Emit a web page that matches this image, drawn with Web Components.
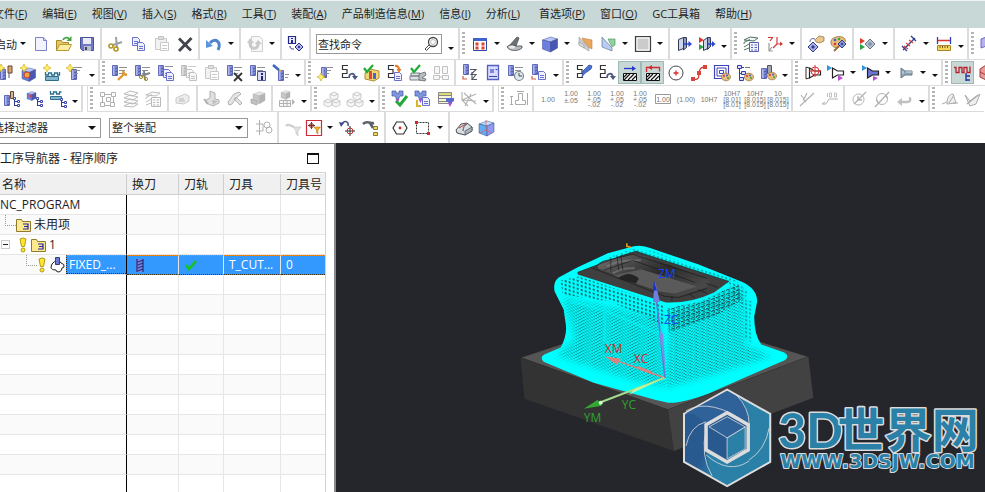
<!DOCTYPE html>
<html lang="zh-CN">
<head>
<meta charset="utf-8">
<title>工序导航器</title>
<style>
  html, body {
    height: 100%;
    margin: 0;
  }
  body {
    --line: #dcdcdc;
    --menu: #c8d8d6;
    font-family: "Open Sans", "Noto Sans CJK SC", sans-serif;
    font-size: 11px;
    color: #1e1e1e;
    background: #fff;
    overflow: hidden;
  }
</style>
</head>
<body>
<cam-app>
  <menu-bar slot="menu"></menu-bar>

  <tool-row slot="tools" size="large">
    <tool-group lead items="_ v new open save | cut copy paste~ close | undo v | redo~ v | info |">启动</tool-group>
    <command-search></command-search>
    <tool-group grip items="fit v shade v cube v planeA planeB v box v | doorA doorB >"></tool-group>
    <tool-group grip items="layers csys v | handCube palette | playCube v | measure v ruler >"></tool-group>
    <tool-group grip items="stack"></tool-group>
  </tool-row>

  <tool-row slot="tools">
    <tool-group items="newTool newGeom newMethod newOp >" pull></tool-group>
    <tool-group grip items="millWrench millCut millCopy millCopy~ paste~ millX millInfo millPen >"></tool-group>
    <tool-group grip items="millStar path pathBars pathPage pathHand twin~ | millList docBlue millClock millDoc >"></tool-group>
    <tool-group grip items="pathPen path hatchA! hatchB! target curve squares treePal millPal >"></tool-group>
    <tool-group grip items="coneT coneA v coneB v coneC v >"></tool-group>
    <tool-group grip items="wave! redBlob"></tool-group>
  </tool-row>

  <tool-row slot="tools">
    <tool-group items="treeTool treeGeom treeMethod >"></tool-group>
    <tool-group grip apart items="groupBox~ sheets~ layers~ | tag~ | solidA~ solidB~ solidC~ | boxTable~ >"></tool-group>
    <tool-group grip items="cubes~ cubes~ >"></tool-group>
    <tool-group grip items="verify funnelDoc funnelGrid axes~ >"></tool-group>
    <tool-group grip apart items="dims~ | d0 d1 d2 d3 d4 d5 d6 d7 d8 d9 d10 | rough~ label~ | diaA~ diaB~ back~ >"></tool-group>
    <tool-group grip items="surfA~ surfB~"></tool-group>
  </tool-row>

  <tool-row slot="tools" size="last">
    <filter-select name="选择过滤器" pull></filter-select>
    <filter-select name="整个装配" wide></filter-select>
    <tool-group flat items="asm~ | funnelOff~ funnelBox v rotate tree | hex rect v | solidD cubeRed"></tool-group>
  </tool-row>

  <operation-navigator slot="side"></operation-navigator>
  <model-view></model-view>
</cam-app>

<script>
// shared icon parts
const mill = (x = 1, y = 1) => `<g transform="translate(${x} ${y})"><path fill="#7d88d6" stroke="#4a55a8" stroke-width=".8" d="M.5.5h5v10h-5z"/><path stroke="#3c4794" stroke-width=".7" d="M3 4l2.500-1M3 7l2.500-1M3 10l2.500-1"/><path stroke="#c6cbf3" d="M1.800 1v9"/></g>`;
const rows = `<path stroke="#8d9196" d="M8 3.500h8M8 6.500h6M8 9.500h4"/>`;
const star = (x = 0, y = 0) => `<path transform="translate(${x} ${y})" fill="#fff06a" stroke="#cfae20" stroke-width=".7" d="M4 0l1.300 2.700L8 4 5.300 5.300 4 8 2.700 5.300 0 4l2.700-1.300z"/>`;
const page = (x, y, c = '#5a62c8') => `<path transform="translate(${x} ${y})" fill="#eef0ff" stroke="${c}" stroke-width=".9" d="M.5.5h5l2 2v6h-7zM2 4.500h4M2 6.500h4"/>`;
const cubeAt = (x, y, s, a = '#b9c6fb', b = '#6d7fe0', c = '#4657b4') => `<g transform="translate(${x} ${y}) scale(${s})" stroke="#3b478f" stroke-width=".5"><path fill="${a}" d="M0 4l8-3 7 2-7 3z"/><path fill="${b}" d="M0 4l8 2v10l-8-3z"/><path fill="${c}" d="M8 6l7-3v9l-7 4z"/></g>`;
const branch = (x, y) => `<g transform="translate(${x} ${y})"><path stroke="#333a8c" d="M1.500 1v8M2 4.500h3M2 8.500h3"/><path fill="#fff" stroke="#3b43b0" d="M.5.500h2v2h-2zM4.500 3.500h2v2h-2zM4.500 7.500h2v2h-2z"/></g>`;
const snake = `<path stroke="#333" stroke-width="1.200" d="M8 1.500H2.500v4H7v4H2.500v4H8"/>`;
const hook = `<path stroke="#4b5680" stroke-width="1.700" d="M9 14c0-5 5-6 6-1"/><path fill="#4b5680" d="M12 12h6l-3 4z"/>`;
const palette = (x, y) => `<g transform="translate(${x} ${y})"><ellipse cx="5" cy="4" rx="4.500" ry="3.800" fill="#e7bd7e" stroke="#94703a" stroke-width=".7"/><circle cx="3" cy="3" r="1" fill="#d33"/><circle cx="6" cy="2.500" r="1" fill="#3a5bd0"/><circle cx="7" cy="5" r="1" fill="#3a3"/></g>`;
const funnel = (x, y, c = '#f0a21c', s = 1) => `<path transform="translate(${x} ${y}) scale(${s})" fill="${c}" stroke="#a8700a" stroke-width=".6" d="M0 0h8L5 4v5L3 7V4z"/>`;
const funnelB = `<path fill="#7f95de" stroke="#43579f" stroke-width=".7" d="M1 1h4v2h3V1h4v5H9L7.500 9h-2L4 6H1z"/><path fill="#b04fd0" d="M4.500 9h4l-2 4z"/>`;
const cone = (f) => `<path fill="${f}" stroke="#222" stroke-width="1.200" d="M5.500 4v10l5-3h6V7h-6z"/>`;
const dim = (a, b, c) => `<g class="t"><text x="9" y="${b ? 6 : 11.500}">${a}</text>${b ? `<text x="9" y="${c ? 11.500 : 13}">${b}</text>` : ''}${c ? `<text x="9" y="17">${c}</text>` : ''}</g>`;
const tick = (x, y) => `<path transform="translate(${x} ${y})" stroke="#1fae35" stroke-width="2.200" d="M1 3l3 4 6-7"/>`;

const ICONS = {
  new: `<path fill="#f2f3ff" stroke="#7c80c9" d="M3.500 2.500h8l3 3v10h-11z"/><path fill="#cfd2f6" stroke="#7c80c9" d="M11.500 2.500v3h3"/>`,
  open: `<path fill="#e4c963" stroke="#a98b2d" d="M1.500 15.500v-10h5l1 2h6v8z"/><path fill="#fbeca0" stroke="#b99a35" d="M1.500 15.500l3-6h12l-3 6z"/><path stroke="#43a640" stroke-width="1.800" d="M8 5c1-3 5-3 6-1"/><path fill="#43a640" d="M16.500 1v5h-5z"/>`,
  save: `<path fill="#6f78c4" stroke="#4a5193" d="M2.500 2.500h13v13h-11l-2-2z"/><path fill="#e9ecf6" d="M5 3h8v6H5z"/><path fill="#b9bfd8" d="M6 11h7v5H6z"/><path fill="#444" d="M7 12h2v3H7z"/>`,
  cut: `<path stroke="#9ba0a6" stroke-width="2" d="M6 10l9-3M10 13l-1-11"/><circle cx="4" cy="11" r="2" stroke="#b39622" stroke-width="1.600"/><circle cx="9" cy="14" r="2" stroke="#b39622" stroke-width="1.600"/>`,
  copy: page(2, 2) + page(7, 7),
  paste: `<path fill="#e3e3e3" stroke="#888" d="M2.500 3.500h11v11h-11z"/><path fill="#bbb" stroke="#777" d="M5.500 1.500h5v3h-5z"/><path fill="#fff" stroke="#888" d="M7.500 7.500h8v8h-8zM9 10.500h5M9 13.500h5"/>`,
  close: `<path stroke="#41444a" stroke-width="2.800" d="M3 3.500l12 12M15.500 3L3 16"/>`,
  undo: `<path stroke="#4f83cd" stroke-width="3" d="M5 8c5-6 12-1 8 7"/><path fill="#5b93dc" d="M1 5l7 6-7 2z"/>`,
  redo: `<path fill="#eee" stroke="#999" d="M5.500 1.500h8l3 3v12h-11z"/><path stroke="#888" stroke-width="3" d="M4 8c0 7 8 7 8 1"/><path fill="#888" d="M1 8l3-5 4 5zM9 9l3-4 4 4z"/>`,
  info: `<path fill="#e8eaff" stroke="#23298a" stroke-width="1.200" d="M1.500 1.500h7v7h-7z"/><path fill="#23298a" d="M4 3h2v1H4zM4 5h2v3H4z"/><path stroke="#23298a" d="M3 11c0 3 2 3 4 3"/><path fill="#b8c0f0" stroke="#23298a" d="M12 8l4 4-4 4-4-4z"/><path fill="#23298a" d="M12 10.500l1.500 1.500-1.500 1.500-1.500-1.500z"/>`,
  fit: `<path fill="#fff" stroke="#2e49a8" d="M2.500 3.500h13v12h-13z"/><path fill="#3f62cf" d="M2 3h14v3H2z"/><path fill="#e04132" d="M4.500 7.500h3v3h-3zM10.500 7.500h3v3h-3zM4.500 11.500h3v3h-3zM10.500 11.500h3v3h-3z"/>`,
  shade: `<path fill="#6c7277" stroke="#44484c" stroke-width=".7" d="M3 11L11 2l2 1-3 8z"/><path fill="#b7bcc0" stroke="#44484c" stroke-width=".8" d="M1 12c2-3 7-2 9-1h6v2c-3 3-12 4-15-1z"/><ellipse cx="6" cy="12" rx="3" ry="1.500" fill="#e8eaeb"/>`,
  cube: cubeAt(1.5, 1, 1),
  planeA: `<path fill="#eaa65a" stroke="#b98445" stroke-width=".6" d="M6 3l10 2v9l-6-3z"/><path fill="#c9ccd0" stroke="#999da2" stroke-width=".6" d="M3 2l10 11v3L3 10z"/><path fill="#dadcdf" stroke="#999" stroke-width=".6" d="M3 7l5 3v3l-5-3z"/>`,
  planeB: `<path fill="#8fd3a0" stroke="#56945f" stroke-width=".7" d="M9 4h7v6l-3 2z"/><path fill="#b9cdf3" stroke="#66799e" stroke-width=".7" d="M3 2l10 11v3L3 12z"/>`,
  box: `<path fill="#cbcbcb" stroke="#3f3f3f" stroke-width="1.200" d="M1.500 1.500h15v15h-15z"/><path stroke="#fff" d="M3 3h12v12H3z"/>`,
  doorA: `<path fill="#cdd5ea" stroke="#333a55" d="M3.500 4.500l5-2v11l-5 2z"/><path fill="#919bbf" stroke="#333a55" d="M8.500 2.500h3v10l-3 2.500z"/><path stroke="#2946d6" stroke-width="1.500" d="M9 9h6"/><path fill="#2946d6" d="M13.500 6L17 9l-3.500 3z"/>`,
  doorB: `<path fill="#e2382d" d="M1 2l5 3-5 3z"/><path fill="#2fa148" d="M1 9l5 3-5 3z"/><path fill="#cdd5ea" stroke="#333a55" d="M5.500 5.500l4-3v11l-4 2z"/><path fill="#919bbf" stroke="#333a55" d="M9.500 2.500h3v9l-3 3z"/><path stroke="#2946d6" stroke-width="1.500" d="M10 9h5"/><path fill="#2946d6" d="M14 6l3.500 3-3.500 3z"/>`,
  layers: `<path fill="#f2f6f2" stroke="#4c7564" d="M1 5l6-3 8 1-4 3zM1 9V7.500l6-3M1 12l5-3M1 15l5-2"/><path fill="#f3f4ff" stroke="#5960b5" d="M6.500 7.500h9v9h-9z"/><path stroke="#5960b5" stroke-width="1.200" d="M8 10h2M11.500 10H14M8 12.500h2M11.500 12.500H14M8 15h2M11.500 15H14"/>`,
  csys: `<path stroke="#ce3b36" stroke-width="1.200" d="M2 2.500h5M7 2l-3 4M11 2v7h5M11 9l-4 4"/><path stroke="#9b9b9b" stroke-width="1.200" d="M3 8v8h4M3 16l3-4"/><path fill="#ce3b36" d="M14 6.500l3 2.500-3 2z"/>`,
  handCube: `<path fill="#e9c890" stroke="#8d6e3a" stroke-width=".7" d="M8 5l4-4 5 1v4l-4 2-4-1z"/><path stroke="#555a85" d="M3 7c0-3 2-4 5-3"/><path fill="#a5aee7" stroke="#333b86" d="M6 7l5 5-5 5-5-5z"/><path fill="#333b86" d="M6 10l2 2-2 2-2-2z"/>`,
  palette: `<path fill="#e7bd7e" stroke="#94703a" stroke-width=".8" d="M1 6c1-4 9-6 13-3 3 3 1 5-2 5l-3 4c-5 2-9-2-8-6z"/><circle cx="5" cy="5" r="1.300" fill="#3a5bd0"/><circle cx="9" cy="4" r="1.300" fill="#3a3"/><circle cx="5" cy="9" r="1.300" fill="#d33"/><path stroke="#9a6b33" stroke-width="1.800" d="M4 16l5-5"/><path fill="#8f9ade" stroke="#333b86" d="M12 5l4 4-4 4-4-4z"/><path fill="#333b86" d="M12 7.500l1.500 1.500-1.500 1.500-1.500-1.500z"/>`,
  playCube: `<path fill="#e2382d" d="M1 3l5 3-5 3z"/><path fill="#2fa148" d="M1 9l5 3-5 3z"/><path fill="#b8c3cc" stroke="#66727c" d="M11 4l5 5-5 5-5-5z"/><path fill="#8592bb" d="M11 6.500l2.500 2.500-2.500 2.500L8.500 9z"/>`,
  measure: `<path stroke="#313b8d" stroke-width="1.300" d="M2 11l5 5M11 1l5 5M3 15L15 3"/><path stroke="#dc3b38" stroke-width="1.200" d="M6 8l4 3M4 11l4 3M9 5l4 3"/>`,
  ruler: `<path stroke="#3240b5" stroke-width="1.300" d="M2.500 2v7M15.500 2v7"/><path stroke="#d33" stroke-width="1.500" d="M3 5.500h12"/><path fill="#f5d55f" stroke="#a88726" d="M2.500 10.500h13v5h-13z"/><path stroke="#75581a" d="M5 11v2M7.500 11v2M10 11v2M12.500 11v2"/>`,
  stack: `<path fill="#b7b2ee" stroke="#6f69c4" d="M1 4l8-3v9l-8 3z"/><path fill="#e8a9c8" d="M6 8l6-2v8l-6 2z"/>`,
  newTool: mill(3, 5) + star() + `<path fill="#dba26f" stroke="#654736" d="M11 2h4v7h-4z"/><path stroke="#4c5474" d="M12 9v5"/>`,
  newGeom: cubeAt(2, 3, .9) + star() + `<circle cx="7" cy="11" r="3" fill="#f4a33c" stroke="#cd3e25"/>`,
  newMethod: `<path stroke="#2e6d8d" stroke-width="1.300" d="M2.500 8v3h3V9h3v2h3V9h3v2h2V8"/><path fill="#83b5cd" stroke="#2e6d8d" d="M2.500 12.500h13v4h-13z"/>` + star(),
  newOp: mill(5, 5) + rows + star(),
  millWrench: mill() + rows + `<path stroke="#e0992e" stroke-width="2.400" d="M7 16l6-6M13 10l3 1M13 10l-1-3"/>`,
  millCut: mill() + rows + `<path stroke="#7f858a" stroke-width="2" d="M7 12l9-3M11 16l-1-9"/><circle cx="7" cy="13" r="1.600" stroke="#a08a2b"/><circle cx="12" cy="15" r="1.600" stroke="#a08a2b"/>`,
  millCopy: mill() + `<path stroke="#8d9196" d="M8 2.500h8"/>` + page(6, 5) + page(9, 8),
  millX: mill() + rows + `<path stroke="#333" stroke-width="1.800" d="M8 9l8 8M16 9l-8 8"/>`,
  millInfo: mill() + rows + `<path fill="#d9dcfa" stroke="#4f5793" d="M8.500 7.500h8v9h-8z"/><path fill="#222960" d="M12 9h2v2h-2zM12 12h2v4h-2z"/>`,
  millPen: mill(6, 6) + `<path stroke="#3c66c4" stroke-width="2.600" d="M1 1l6 5"/><path stroke="#8d9196" d="M13 10.500h4M13 13.500h3"/><path fill="#e7b13c" d="M7 5l3 1-2 2z"/>`,
  millStar: mill(4, 3) + rows + star(0, 9),
  path: snake + hook,
  pathBars: `<path fill="#f2d779" stroke="#b08b31" d="M2 9l5-4 9 2v7l-5 3-9-2z"/><path fill="#da4b3e" d="M6 7h3v8H6z"/><path fill="#4a66cf" d="M10 9h3v6h-3z"/>` + tick(0, 1),
  pathPage: snake + page(8, 8) + `<path stroke="#e47c27" stroke-width="2.200" d="M9 2c3-1 4 2 4 4"/><path fill="#e47c27" d="M10.500 5h5L13 9z"/>`,
  pathHand: `<path fill="#dfe2e5" stroke="#7b8085" d="M2 9h9v3H2zM1 12h11v4H1z"/><path fill="#b8bdc3" stroke="#62676c" stroke-width=".8" d="M10 10l6-2 1 3-4 3 4 1-1 2-6-1z"/>` + tick(1, 1),
  twin: `<path fill="#eee" stroke="#777" d="M2.500 2.500h5v7h-5zM10.500 2.500h5v7h-5zM1.500 11.500h6v4h-6zM10.500 11.500h6v4h-6z"/><path stroke="#777" d="M7 13h4"/>`,
  millList: mill(2, 0) + `<path stroke="#d65b3c" stroke-width="1.200" d="M2 12v3h4"/><path stroke="#55595f" stroke-width="1.100" d="M9 5.500h6l-5 5h5l-4 5h5M11 8v8"/>`,
  docBlue: `<path fill="#d9dcff" stroke="#5560bd" stroke-width="1.300" d="M3.500 1.500h11v14h-11z"/><path fill="#7c87dc" d="M6 5h4v4H6z"/><path stroke="#3a44ad" d="M5 12.500h8M11.500 5.500h2"/>`,
  millClock: mill() + rows + `<circle cx="12" cy="12" r="4.500" fill="#dfe7eb" stroke="#788992" stroke-width="1.200"/><path stroke="#45545b" d="M12 9v3h3"/>`,
  millDoc: mill(2, 0) + `<path stroke="#d65b3c" stroke-width="1.200" d="M2 12v3h4"/>` + page(8, 7),
  pathPen: snake + `<path fill="#4c73d6" stroke="#25418f" stroke-width=".7" d="M8 7l6-6 3 1-1 3-7 5-2 3z"/>`,
  hatchA: `<path stroke="#2536c8" stroke-width="1.300" d="M3 4.500h9"/><path fill="#2536c8" d="M11 2l4 2.500-4 2.500z"/><path fill="#fff" stroke="#111" d="M2.500 9.500h13v7h-13z"/><path stroke="#111" stroke-width="1.200" d="M3 13l3-3M3 16l6-6M7 16l6-6M11 16l4-4"/>`,
  hatchB: `<path stroke="#d12a2a" stroke-width="1.300" d="M2.500 8V3.500h13v4"/><path fill="#d12a2a" d="M8 1v5L4 3.500z"/><path fill="#fff" stroke="#111" d="M2.500 9.500h13v7h-13z"/><path stroke="#111" stroke-width="1.200" d="M3 13l3-3M3 16l6-6M7 16l6-6M11 16l4-4"/>`,
  target: `<circle cx="9" cy="9" r="7" fill="#fff" stroke="#444"/><path stroke="#e02a2a" stroke-width="1.300" d="M6.500 9h5M9 6.500v5"/>`,
  curve: `<path stroke="#c93c33" stroke-width="1.300" d="M3 15c11 3 1-12 12-12"/><path fill="#d8453b" d="M1 13h4v4H1zM7 7h4v4H7zM13 1h4v4h-4z"/>`,
  squares: `<path fill="#fff" stroke="#3f45b8" stroke-width="1.200" d="M1.500 1.500h14v13h-14z"/><path stroke="#3f45b8" d="M4 4h9v8H4zM6.500 6.500h4v3h-4z"/>` + palette(8, 9),
  treePal: `<path stroke="#333fa8" d="M3.500 2v14M4 3.500h4M4 9.500h4M4 15.500h3"/><path fill="#d9dcff" stroke="#333fa8" d="M1.500 1.500h4v3h-4zM5.500 7.500h4v3h-4zM3.500 13.500h4v3h-4z"/><path stroke="#777" d="M9 3.500h5M11 9.500h3"/>` + palette(8, 9),
  millPal: mill(2, 4) + `<path fill="#a3a6af" stroke="#53565f" d="M8.500 1.500h4v8h-4z"/>` + palette(8, 8),
  coneT: cone('#fff') + `<path stroke="#333" d="M5 4L2 3v12l3-1"/><circle cx="11" cy="7" r="4" stroke="#d33"/><path stroke="#d33" d="M11 1v12M5 7h12"/>`,
  coneA: cone('#fff') + `<path fill="#3295dd" d="M0 1l5 3-5 3z"/><path fill="#b94fd2" d="M11 11l5 3-5 3z"/>`,
  coneB: cone('#6c75d6') + `<path fill="#3295dd" d="M0 1l5 3-5 3z"/><path fill="#b94fd2" d="M11 12l5 2-5 3z"/>`,
  coneC: `<path fill="#8ea5b6" stroke="#66798a" d="M4 4v10l4-3h7V7H8z"/><path stroke="#d5dfe6" d="M6 7v3M9 8h6"/>`,
  wave: `<path stroke="#b81f2b" stroke-width="1.300" d="M0 3.500h2v5h3v-5h3v5h2v-5h3v5h3v-6"/><path stroke="#1f2d9f" stroke-width="1.300" d="M12 9v8M12 12h4M12 16h4"/>`,
  redBlob: `<path fill="#e89a98" stroke="#a53a3a" d="M3 5l6-4 6 3v8l-6 4-6-3z"/><path stroke="#a53a3a" d="M3 8l6 3 6-3"/>`,
  treeTool: mill(1, 5) + `<path fill="#d5b498" stroke="#654736" d="M7.500 1.500h3v7h-3z"/>` + branch(10, 7),
  treeGeom: cubeAt(1, 1, .6) + `<circle cx="5" cy="6" r="1.500" fill="#e04132"/>` + branch(10, 7),
  treeMethod: `<path stroke="#2e6d8d" stroke-width="1.300" d="M1.500 1v3h3V2h3v2h3V2h2"/><path fill="#83b5cd" stroke="#2e6d8d" d="M1.500 6.500h11v3h-11z"/>` + branch(11, 8),
  groupBox: `<path stroke="#555" d="M3.500 4.500h11v11h-11z"/><path fill="#fff" stroke="#555" d="M1.500 2.500h4v4h-4zM12.500 2.500h4v4h-4zM1.500 12.500h4v4h-4zM11.500 12.500h4v4h-4zM7.500 7.500h4v4h-4z"/>`,
  sheets: `<path fill="#f7f7f7" stroke="#666" d="M2 4l6-3 8 2-5 3zM2 8l6-3 8 2-5 3zM2 12l6-3 8 2-5 3zM2 16l6-3 8 1-5 3z"/>`,
  tag: `<path fill="#d7d7d7" stroke="#888" d="M2 8l9-4 4 2v5l-5 3-8-1z"/><path stroke="#666" d="M5 9h5M5 11h6"/>`,
  solidA: `<path fill="#bbb" stroke="#555" d="M7 1l5 2v6l4 1v3l-6 3-7-3v-3l4-2z"/><path fill="#777" d="M9 10l6 1-5 4z"/><path stroke="#555" stroke-width="2" d="M1 9l4 5"/>`,
  solidB: `<path fill="#c7c7c7" stroke="#555" d="M2 12l6-8 5-2 2 2-5 4-4 6-3 1zM10 7l6 6-2 2-6-6z"/>`,
  solidC: cubeAt(4, 1, .8) + `<path fill="#777" stroke="#555" d="M2 9l6 2v4l-6-2z"/>`,
  boxTable: cubeAt(3, 0, .6) + `<path fill="#eee" stroke="#555" d="M1.500 10.500h11v6h-11zM2 13.500h10M5.500 11v5M9 11v5"/><path fill="#555" d="M14 9l3 3-3 3z"/>`,
  cubes: `<g fill="#ececec" stroke="#888"><path d="M7 4l4-2 4 2v4l-4 2-4-2zM1 11l4-2 4 2v4l-4 2-4-2zM9 11l4-2 4 2v4l-4 2-4-2z"/><path d="M7 4l4 2 4-2M1 11l4 2 4-2M9 11l4 2 4-2"/></g>`,
  verify: funnelB + `<path stroke="#25a83a" stroke-width="3" d="M5 11l4 4 7-9"/>`,
  funnelDoc: funnelB + page(8, 7) + `<path stroke="#d8b62b" stroke-width="2" d="M3 10v7M3 16h4"/>`,
  funnelGrid: `<path fill="#f6f6dd" stroke="#888" d="M1.500 2.500h13v11h-13zM2 5.500h12M2 8.500h12M2 11.500h12"/><path fill="#dcdc7b" d="M2 3h12v2H2z"/><path fill="#5768cf" d="M9 8h8v3l-3 2h-2L9 11z"/><path fill="#b04fd0" d="M11 13h4l-2 4z"/>`,
  axes: `<path stroke="#555" stroke-width="1.100" d="M2 2v8l6 6M2 10l14-6M2 10l14 1M4 3l12 11M5 16l6-12"/>`,
  dims: `<path stroke="#444" d="M5.500 14.500v-4h3v-7h4v7h3v4zM1.500 6v9M0 6.500h3M0 14.500h3M7 1.500h7M17.500 3v12"/>`,
  d0: dim('1.00'), d1: dim('1.00', '±.05'), d2: dim('1.00', '+.05', '-.02'), d3: dim('1.00', '+.05', '-.02'), d4: dim('1.00', '+.05', '-.02'),
  d5: `<path stroke="#999" d="M1.500 4.500h15v9h-15z"/>` + dim('1.00'), d6: dim('(1.00)'), d7: dim('10H7'),
  d8: dim('10H7', '[8.01]', '[8.01]'), d9: dim('10H7', '[8.015]', '[8.015]'), d10: dim('10', '[8.015]', '[8.015]'),
  rough: `<path stroke="#555" stroke-width="1.200" d="M2 16L16 3M3 5l3 4M9 3l-3 6M5 9l3 3"/>`,
  label: `<path stroke="#555" d="M1 14h4l3-5h9M1 14l3-2"/><path stroke="#777" d="M6.500 3v4M8.500 3h2v4h-2zM13.500 3h2v4h-2z"/>`,
  diaA: `<circle cx="8.500" cy="9.500" r="5.500" stroke="#555"/><path stroke="#555" stroke-width="1.300" d="M4 14L16 2M8 10v-4M8 10h4"/>`,
  diaB: `<circle cx="9" cy="9" r="5.500" stroke="#555"/><path stroke="#555" stroke-width="1.300" d="M2 17L16 2M5 13l-1-3M13 5l1 3"/>`,
  back: `<path stroke="#777" stroke-width="2.400" d="M5 12h6c4 0 4-4 2-4"/><path fill="#777" d="M1 12l5-4v8z"/>`,
  surfA: `<path fill="#ddd" stroke="#444" d="M6 14c0-6 2-10 6-10l3 9zM1 14l5-2M12 13h5"/><path stroke="#444" d="M8 13l5-8"/>`,
  surfB: `<path fill="#ddd" stroke="#444" d="M1 5l5 6 10-7-4 10-6 2z"/><path stroke="#444" stroke-width="1.300" d="M3 14l11-9"/>`,
  asm: `<path stroke="#555" d="M4.500 1v15M1 5h7M1 12h7v-7"/><circle cx="12" cy="6" r="3" stroke="#555"/><circle cx="14" cy="11" r="3" stroke="#555"/>`,
  funnelOff: `<path stroke="#999" stroke-width="2.500" d="M2 7c3-4 5 2 8 0"/>` + funnel(9, 8, '#bbb'),
  funnelBox: `<path fill="#fff" stroke="#cf2b3d" stroke-width="1.200" d="M1.500 1.500h15v15h-15z"/><circle cx="6.500" cy="6.500" r="2" stroke="#802f2f"/><path stroke="#802f2f" d="M6.500 3v7M3 6.500h7"/>` + funnel(9, 8, '#f3b229', .8),
  rotate: `<path stroke="#3a4a89" stroke-width="1.500" d="M3 5c2-4 7-3 6 2"/><path fill="#3a4a89" d="M0 3l5 1-3 4z"/><circle cx="11" cy="12" r="3" stroke="#d33"/><path stroke="#333" d="M11 7v10M6 12h10"/>`,
  tree: `<path stroke="#59626a" stroke-width="2.600" d="M1 5c4-4 8 0 11-1M8 4l3 5"/><path fill="#eed869" stroke="#8a7b2b" d="M11.500 7.500h4v3h-4zM11.500 13.500h4v3h-4z"/>`,
  hex: `<path fill="#fff" stroke="#333" stroke-width="1.200" d="M5.500 3h7L16 9l-3.500 6h-7L2 9z"/><circle cx="9" cy="9" r="1.400" fill="#dd2525"/>`,
  rect: `<path stroke="#333" stroke-dasharray="2 1" d="M2.500 3.500h12v11h-12z"/><path fill="#dd2525" d="M1 2h3v3H1zM13 13h3v3h-3z"/>`,
  solidD: `<path fill="#d7dde1" stroke="#48525a" d="M1 11l5-6 6-1 5 4v4l-7 4-8-2z"/><path fill="#a9b3ba" stroke="#48525a" stroke-width=".7" d="M10 16v-4l7-4v4z"/><path stroke="#cf3434" d="M4 9l7-4"/><path stroke="#48525a" d="M8 12c0-4 2-6 4-7"/>`,
  cubeRed: cubeAt(1, 1, 1, '#bfe1ff', '#62aef0', '#8d9bf0') + `<path stroke="#e2606b" stroke-width=".8" d="M8 1v10M8 11l6 3M8 11l-6 3"/>`,
};

const icon = (name) => `<svg viewBox="0 0 18 18" width="18" height="18" fill="none" aria-hidden="true">${ICONS[name]}</svg>`;

class CamApp extends HTMLElement {
  constructor() {
    super();
    this.attachShadow({ mode: 'open' }).innerHTML = `
      <style>
        :host {
          display: flex;
          flex-direction: column;
          height: 100vh;
          overflow: hidden;
        }
        main {
          display: flex;
          flex: 1;
          min-height: 0;
        }
      </style>
      <slot name="menu"></slot>
      <slot name="tools"></slot>
      <main><slot name="side"></slot><slot></slot></main>`;
  }
}

class MenuBar extends HTMLElement {
  constructor() {
    super();
    const items = [['文件', 'F'], ['编辑', 'E'], ['视图', 'V'], ['插入', 'S'], ['格式', 'R'], ['工具', 'T'], ['装配', 'A'],
      ['产品制造信息', 'M'], ['信息', 'I'], ['分析', 'L'], ['首选项', 'P'], ['窗口', 'O'], ['GC工具箱', ''], ['帮助', 'H']];
    this.attachShadow({ mode: 'open' }).innerHTML = `
      <style>
        :host {
          display: flex;
          gap: 15px;
          height: 27px;
          align-items: center;
          margin-left: -7px;
          background: var(--menu);
          border-top: 1px solid #eef3f2;
        }
        button {
          all: unset;
          white-space: nowrap;
          line-height: 16px;
          padding-bottom: 2px;
        }
        .far { margin-left: 4px; }
      </style>
      ${items.map(([t, k]) => `<button class="${k === 'P' ? 'far' : ''}">${t}${k ? `(<u>${k}</u>)` : ''}</button>`).join('')}`;
  }
}

class ToolRow extends HTMLElement {
  constructor() {
    super();
    this.attachShadow({ mode: 'open' }).innerHTML = `
      <style>
        :host {
          display: flex;
          flex: none;
          height: 26px;
          overflow: hidden;
        }
        :host([size="large"]) { height: 32px; }
        :host([size="last"]) {
          height: 31px;
          align-items: center;
        }
      </style>
      <slot></slot>`;
  }
}

// items: icon names, "v" arrow, ">" overflow arrow, "|" separator, "_" slot; "~" disabled, "!" pressed
class ToolGroup extends HTMLElement {
  connectedCallback() {
    if (this.shadowRoot) return;
    this.attachShadow({ mode: 'open' }).innerHTML = `
      <style>
        :host {
          display: flex;
          flex: none;
          align-items: center;
          box-sizing: border-box;
          border-bottom: 1px solid var(--line);
        }
        :host([pull]) { margin-left: -6px; }
        :host([lead]) { margin-left: -5px; }
        :host([apart]) {
          margin-left: 4px;
          border-left: 1px solid var(--line);
        }
        :host([flat]) {
          border: 0;
          height: 100%;
          margin-left: 4px;
        }
        button { all: unset; }
        .tool {
          display: grid;
          place-items: center;
          width: 23px;
          height: 23px;
          box-sizing: border-box;
        }
        .off svg {
          filter: grayscale(1);
          opacity: .45;
        }
        .on {
          background: var(--menu);
          border: 1px solid #9dbab5;
        }
        .framed { width: 20px; }
        .drop, .more {
          width: 12px;
          display: grid;
          place-items: center;
        }
        .drop::after, .more::after {
          content: "";
          border: 3px solid transparent;
          border-top-color: #111;
          border-bottom: 0;
        }
        .more {
          align-self: stretch;
          border-right: 2px solid var(--line);
          padding-top: 6px;
        }
        .sep {
          width: 2px;
          margin: 0 2px;
          align-self: stretch;
          background: var(--line);
        }
        .grip {
          width: 3px;
          height: 24px;
          margin: 0 3px 0 2px;
          background: linear-gradient(#b4b4b4 2px, transparent 2px) 0 0 / 3px 4px;
        }
        .t {
          font: 7px "Liberation Sans", sans-serif;
          fill: #777;
          text-anchor: middle;
        }
        svg { overflow: visible; display: block; }
      </style>
      ${this.hasAttribute('grip') ? '<span class="grip"></span>' : ''}
      ${this.getAttribute('items').split(' ').map(t => this.item(t)).join('')}`;
  }

  item(t) {
    if (t === '_') return '<slot></slot>';
    if (t === '|') return '<span class="sep"></span>';
    if (t === 'v') return '<button class="drop" aria-label="更多"></button>';
    if (t === '>') return '<button class="more" aria-label="选项"></button>';
    const name = t.replace(/[~!]/, '');
    const cls = t.endsWith('~') ? 'off' : t.endsWith('!') ? 'on' : '';
    return `<button class="tool ${cls} ${name === 'funnelBox' ? 'framed' : ''}" aria-label="${name}">${icon(name)}</button>`;
  }
}

class CommandSearch extends HTMLElement {
  constructor() {
    super();
    this.attachShadow({ mode: 'open' }).innerHTML = `
      <style>
        :host {
          display: flex;
          align-items: center;
          padding-left: 3px;
          border-right: 2px solid var(--line);
          border-bottom: 1px solid var(--line);
        }
        label {
          display: flex;
          align-items: center;
          width: 126px;
          height: 20px;
          box-sizing: border-box;
          border: 1px solid #999;
        }
        input {
          all: unset;
          flex: 1;
          min-width: 0;
          padding-left: 1px;
        }
        .more {
          all: unset;
          margin: 10px 4px 0 6px;
          border: 3px solid transparent;
          border-top-color: #111;
          border-bottom: 0;
        }
      </style>
      <label>
        <input value="查找命令" aria-label="查找命令">
        <svg width="18" height="18" viewBox="0 0 18 18" fill="none" stroke="#444"><circle cx="10" cy="7" r="4.500" stroke-width="1.300"/><circle cx="10" cy="7" r="2.500" stroke="#bbb"/><path d="M6 10l-4 4 1.500 1.500 4-4"/></svg>
      </label>
      <button class="more" aria-label="选项"></button>`;
  }
}

class FilterSelect extends HTMLElement {
  connectedCallback() {
    if (this.shadowRoot) return;
    const name = this.getAttribute('name');
    this.attachShadow({ mode: 'open' }).innerHTML = `
      <style>
        :host {
          display: grid;
          align-items: center;
          width: 111px;
          margin-right: 8px;
        }
        :host([pull]) { margin-left: -10px; }
        :host([wide]) { width: 139px; margin-right: 0; }
        select, .arrow { grid-area: 1 / 1; }
        select {
          appearance: none;
          width: 100%;
          height: 20px;
          padding: 0 0 0 2px;
          border: 1px solid #999;
          border-radius: 0;
          background: #fff;
          font: inherit;
          color: inherit;
        }
        .arrow {
          justify-self: end;
          margin-right: 5px;
          border: 4px solid transparent;
          border-top-color: #111;
          border-bottom: 0;
          pointer-events: none;
        }
      </style>
      <select aria-label="${name}"><option>${name}</option></select>
      <span class="arrow"></span>`;
  }
}

class OperationNavigator extends HTMLElement {
  constructor() {
    super();
    const bang = '<svg width="10" height="16" viewBox="0 0 10 16"><path fill="#ffe52e" stroke="#b39a18" d="M2 2q3-2 6 0L6.500 9.500h-3z"/><circle cx="5" cy="13" r="2" fill="#ffe52e" stroke="#b39a18"/></svg>';
    const folder = '<svg width="15" height="14" viewBox="0 0 15 14" fill="none"><path fill="#ffe98f" stroke="#8f7b30" d="M.5 13.500v-12h5l1 2h8v10z"/><path stroke="#1c26a8" stroke-width="1.200" d="M7 6h5v2.500H8M12 8.500V11H7"/></svg>';
    const op = '<svg width="15" height="16" viewBox="0 0 15 16" fill="#fff" stroke="#222"><path d="M2 7q2-3 5-3 4 0 4 2 4 1 3 4l-2 1q0 3-3 4-3 0-3-2-5 0-5-3z"/><path fill="#6c78d6" stroke="#343e83" d="M5.500.500h4v7h-4z"/></svg>';
    const tool = '<svg width="10" height="15" viewBox="0 0 10 15"><path fill="#7d88e6" d="M1 1h8v13H1z"/><path stroke="#23307c" stroke-width="1.300" d="M2 1v13M8 1v13M3 4l5-2M3 7l5-2M3 10l5-2M3 13l5-2"/></svg>';
    const check = '<svg width="14" height="12" viewBox="0 0 14 12" fill="none"><path stroke="#14c51f" stroke-width="2.600" d="M2 6l3 4 7-8"/></svg>';
    this.attachShadow({ mode: 'open' }).innerHTML = `
      <style>
        :host {
          display: flex;
          flex-direction: column;
          flex: none;
          width: 334px;
          border-top: 1px solid #85858a;
          border-right: 2px solid #8a8a8a;
          font-size: 12px;
          overflow: hidden;
        }
        header {
          display: flex;
          align-items: center;
          justify-content: space-between;
          height: 28px;
          padding-right: 15px;
        }
        h2 {
          margin: 0;
          font: inherit;
        }
        header button {
          all: unset;
          width: 10px;
          height: 8px;
          border: 1px solid #111;
          border-top-width: 2px;
        }
        .list {
          flex: 1;
          min-height: 0;
          overflow: hidden;
          margin-right: 8px;
          border: 1px solid #d3d3d3;
          border-width: 1px 1px 0 0;
          padding-top: 1px;
        }
        table {
          width: 100%;
          table-layout: fixed;
          border-collapse: separate;
          border-spacing: 0;
        }
        th, td {
          height: 20px;
          box-sizing: border-box;
          padding: 0 0 0 5px;
          border-right: 1px solid #e6e6e6;
          border-bottom: 1px solid #e6e6e6;
          font-weight: normal;
          text-align: left;
          line-height: 16px;
          white-space: nowrap;
          overflow: hidden;
        }
        th {
          height: 21px;
          padding-top: 2px;
          background: #f0f0f0;
          border-color: #cfcfcf;
        }
        th:first-child { padding-left: 2px; }
        td:first-child {
          padding: 0;
          border-right: 1px solid #000;
        }
        th:last-child, td:last-child { border-right: 0; }
        tr:nth-child(even) td { background: #fafafa; }
        tr.selected td:not(:first-child), tr.selected .name {
          background: #3399ff;
          color: #fff;
          border-top: 1px dotted #f28a1c;
          border-bottom: 1px dotted #3a2a10;
        }
        .cell {
          display: flex;
          align-items: center;
          gap: 3px;
          height: 19px;
        }
        .cell svg { flex: none; }
        .in1 { padding-left: 16px; }
        .in2 { padding-left: 1px; }
        .in3 { padding-left: 37px; }
        .twig {
          width: 10px;
          height: 10px;
          margin: -9px -3px 0 -11px;
          border-left: 1px dotted #999;
          border-bottom: 1px dotted #999;
        }
        .name {
          flex: 1;
          height: 19px;
          box-sizing: border-box;
          padding-left: 2px;
          margin-left: -2px;
          line-height: 17px;
          border-left: 1px dotted #3a2a10;
        }
        .fold {
          all: unset;
          width: 7px;
          height: 7px;
          margin-right: 5px;
          border: 1px solid #ccc;
          background: linear-gradient(#222, #222) center / 5px 1px no-repeat;
        }
        td svg { display: block; }
      </style>
      <header><h2>工序导航器 - 程序顺序</h2><button aria-label="最大化"></button></header>
      <div class="list">
        <table>
          <colgroup><col style="width: 127px"><col style="width: 52px"><col style="width: 45px"><col style="width: 57px"><col></colgroup>
          <thead><tr><th>名称</th><th>换刀</th><th>刀轨</th><th>刀具</th><th>刀具号</th></tr></thead>
          <tbody>
            <tr><td>NC_PROGRAM</td><td></td><td></td><td></td><td></td></tr>
            <tr><td><div class="cell in1"><i class="twig"></i>${folder}未用项</div></td><td></td><td></td><td></td><td></td></tr>
            <tr><td><div class="cell in2"><button class="fold" aria-label="折叠"></button>${bang}${folder} 1</div></td><td></td><td></td><td></td><td></td></tr>
            <tr class="selected"><td><div class="cell in3"><i class="twig"></i>${bang}${op}<span class="name">FIXED_...</span></div></td><td style="padding-left: 8px">${tool}</td><td>${check}</td><td>T_CUT...</td><td>0</td></tr>
            ${'<tr><td></td><td></td><td></td><td></td><td></td></tr>'.repeat(12)}
          </tbody>
        </table>
      </div>`;
  }
}

class ModelView extends HTMLElement {
  constructor() {
    super();
    const skin = 'M577 268L607 254 633 247Q641 245 650 249L697 265 740 282Q756 289 756 302L753 317Q753 335 760 345L783 353Q789 357 783 361L750 375 707 394Q680 404 667 403L654 400 593 383 543 362Q538 357 546 354L560 348Q567 335 565 324L563 310 554 292Q552 283 558 278Z';
    this.attachShadow({ mode: 'open' }).innerHTML = `
      <style>
        :host {
          display: block;
          flex: 1;
          min-width: 0;
          background: #25262b;
        }
        svg {
          display: block;
          width: 100%;
          height: 100%;
        }
        .axis {
          font: 12px "Open Sans", sans-serif;
        }
        .mark {
          fill: #2b80a8;
          stroke: #dcdcdc;
          paint-order: stroke;
          stroke-linejoin: round;
          font-weight: bold;
        }
      </style>
      <svg viewBox="336 144 649 348" preserveAspectRatio="xMinYMin slice" fill="none">
        <defs>
          <pattern id="left" width="4" height="3" patternUnits="userSpaceOnUse" patternTransform="skewY(17)"><path fill="#1c3038" d="M0 0h2v1H0zM2 1.500h2v1H2z"/></pattern>
          <pattern id="right" width="4" height="3" patternUnits="userSpaceOnUse" patternTransform="skewY(-22)"><path fill="#1c3038" d="M0 0h2v1H0zM2 1.500h2v1H2z"/></pattern>
          <pattern id="holes" width="4" height="4" patternUnits="userSpaceOnUse" patternTransform="skewY(17)"><path fill="#1d2b30" d="M0 0h2v2H0z"/></pattern>
          <pattern id="slits" width="5" height="4" patternUnits="userSpaceOnUse" patternTransform="skewY(-19)"><path fill="#1d2b30" d="M0 0h4v1H0zM2 2h2v1H2z"/></pattern>
          <linearGradient id="wall" x1="0" y1="0" x2="1" y2=".6"><stop stop-color="#777"/><stop offset=".3" stop-color="#4a4a4a"/><stop offset=".6" stop-color="#2c2c2c"/><stop offset="1" stop-color="#484848"/></linearGradient>
          <linearGradient id="hexfill" x2="1" y2=".4"><stop offset=".4" stop-color="#28598f"/><stop offset=".6" stop-color="#2b80a8"/></linearGradient>
          <filter id="soft"><feGaussianBlur stdDeviation="3"/></filter>
          <mask id="fadeLeft"><path fill="#999" filter="url(#soft)" d="M563 298L660 318 666 388 630 380 556 356 574 340z"/></mask>
          <mask id="fadeRight"><path fill="#999" filter="url(#soft)" d="M668 314L742 288 744 345 770 357 705 377 666 388z"/></mask>
        </defs>

        <!-- base block -->
        <path fill="#555" stroke="#222" stroke-width=".6" d="M520 358L620 325 730 333 807 357 667 410z"/>
        <path fill="#333" d="M520 358L667 410 673 451 524 399z"/>
        <path fill="#424242" d="M667 410L807 357 812 398 673 451z"/>

        <!-- tool path skin -->
        <path fill="#0ff" d="${skin}"/>
        <path fill="url(#left)" mask="url(#fadeLeft)" d="M545 280H670V402H545z"/>
        <path fill="url(#right)" mask="url(#fadeRight)" d="M666 280H785V402H666z"/>
        <path fill="url(#holes)" opacity=".75" d="M560 281L578 277 662 305 664 326 610 302 562 295z"/>
        <path fill="url(#slits)" opacity=".85" d="M666 309L700 302 737 284 741 300 715 316 668 333z"/>
        <path fill="url(#holes)" opacity=".4" d="M600 261L632 249 652 252 735 281 746 292 742 310 728 285 640 253zM742 300l10 2-3 16 2 25-8-4z"/>
        <path stroke="#0ff" stroke-width="3" opacity=".35" d="M570 302L604 311 660 335M604 305v35l18 24"/>

        <!-- pocket -->
        <path fill="#3f3f3f" d="M577 273L622 256 635 252 728 282 713 293Q690 304 665 303L577 275z"/>
        <path fill="url(#wall)" d="M597 269Q594 266 602 262L632 255 645 257 706 279Q712 284 702 289L676 297 664 295z"/>
        <path fill="#5a5a5a" d="M613 276L640 270 696 287 674 294 658 292z"/>
        <path fill="#242424" d="M617 279Q628 270 638 279L635 284z"/>
        <path stroke="#8a8a8a" stroke-width="2" opacity=".5" d="M606 267Q618 260 640 261M612 274Q622 268 634 269"/>
        <path stroke="#151515" stroke-width=".6" d="M577 273L622 256 635 252 728 282M597 269Q594 266 602 262L632 255 706 279M603 271L632 261 694 283M610 258v14M616 256l2 15M620 256l2 15M688 294l6 5M697 290l9 4M705 284l12 4M671 297v5M590 268l74 29 14 1 28-9"/>
        <path stroke="#e8a324" stroke-width="1.500" d="M626 244v3l4 1"/>

        <!-- axes -->
        <path stroke="#d9837f" stroke-width="1.500" d="M664 378L607 358"/>
        <path fill="#d9837f" d="M604 357l16 2-4 6zM636 366l14 5 2 4-14-5z"/>
        <path stroke="#a5dc8e" stroke-width="2" d="M664 378L596 404"/>
        <path fill="#c3f59c" d="M664 378l-36 17 6-6z"/>
        <path fill="#34a834" d="M583 409l14-9 4 6z"/><circle cx="600" cy="403" r="2" fill="#d4ffd0"/>
        <path stroke="#6474d8" stroke-width="1.600" d="M664 378L655 296"/>
        <path fill="#7e8ce8" d="M658 331l4 3 3 42z"/>
        <path fill="#7080dd" d="M654 282l5 20q-3 2-7 0z"/><path fill="#1534cd" d="M653 281l3 10h-4z"/>
        <g class="axis">
          <text x="657" y="279" fill="#1645ff">ZM</text><text x="663" y="324" fill="#1645ff">ZC</text>
          <text x="604" y="353" fill="#d92c2c">XM</text><text x="633" y="363" fill="#d92c2c">XC</text>
          <text x="621" y="409" fill="#2ea22e">YC</text><text x="583" y="422" fill="#2ea22e">YM</text>
        </g>

        <!-- site badge -->
        <g stroke="#dcdcdc">
          <path fill="url(#hexfill)" stroke-width="2" d="M726 390l43 24v48l-43 24-43-24v-48z"/>
          <path stroke="none" fill="#2f6299" d="M684 414l42-23 14 8q8 10 8 26l-22-13-22 13q-8-13-20-11z"/>
          <path stroke="none" fill="#2b80a8" d="M705 451l21 12 22-13 20 11-42 24-16-9z"/>
          <path stroke-width=".8" d="M685 411q25-14 63 14M735 395q13 13 13 30M768 428q-4 22-20 32M748 461q-20 14-43-6M705 430q-6 26 6 46M685 446q4-20 20-24"/>
          <path fill="#28598f" stroke-width="3.500" d="M726 413l21 12v25l-21 12-21-12v-25z"/>
          <path fill="#2b80a8" stroke-width=".8" d="M726 438l18-11v22l-18 10z"/>
          <path fill="#2f6299" stroke-width=".8" d="M708 427l18-10 18 10-18 11z"/>
        </g>
        <g class="mark">
          <text x="777" y="448" font-size="48" font-family="Lato" stroke-width="3">3D</text>
          <text x="836" y="447" font-size="47" font-family="Noto Sans CJK SC" stroke-width="3">世界网</text>
          <text x="779" y="468" font-size="19" font-family="DejaVu Sans" stroke-width="2">WWW.3DSJW.COM</text>
        </g>
      </svg>`;
  }
}

customElements.define('cam-app', CamApp);
customElements.define('menu-bar', MenuBar);
customElements.define('tool-row', ToolRow);
customElements.define('tool-group', ToolGroup);
customElements.define('command-search', CommandSearch);
customElements.define('filter-select', FilterSelect);
customElements.define('operation-navigator', OperationNavigator);
customElements.define('model-view', ModelView);
</script>
</body>
</html>
